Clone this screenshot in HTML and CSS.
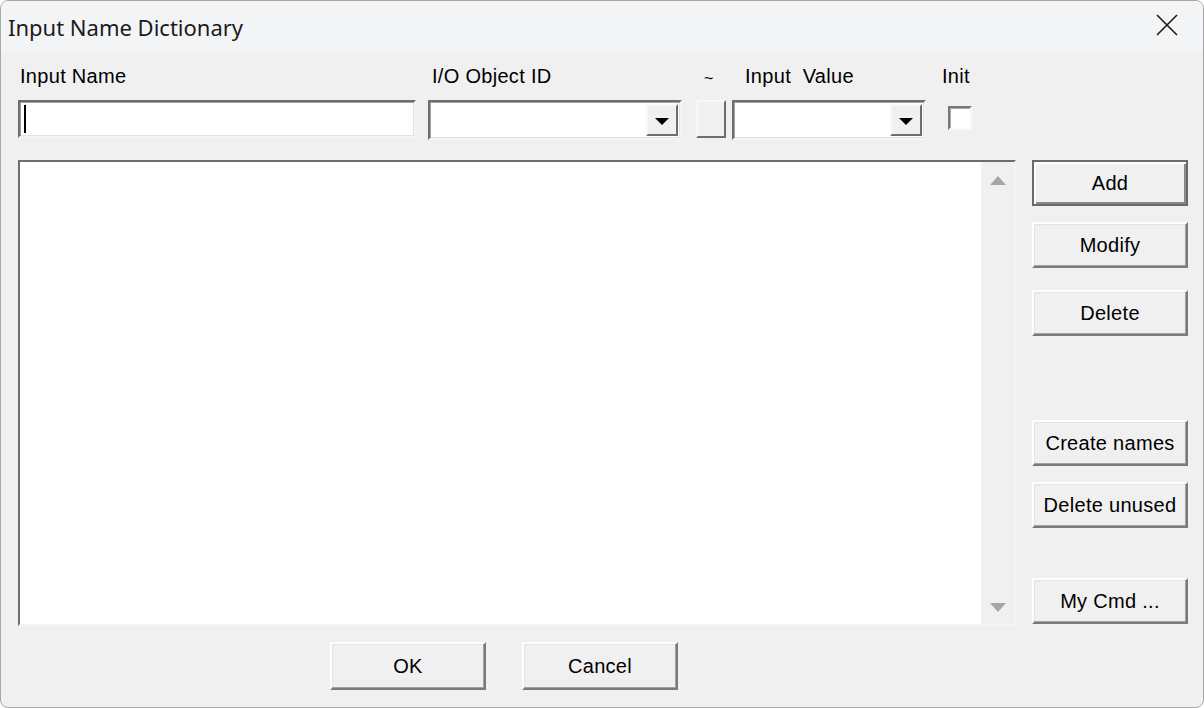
FILE: index.html
```html
<!DOCTYPE html>
<html lang="en">
<head>
    <meta charset="UTF-8">
    <title>Input Name Dictionary</title>
    <link rel="stylesheet" href="styles.css">
</head>
<body>
    <div class="window">
        <div class="titlebar">
            <span class="title">Input Name Dictionary</span>
            <svg class="close" width="22" height="22" viewBox="0 0 22 22">
                <path d="M1 1 L21 21 M21 1 L1 21" stroke="#1a1a1a" stroke-width="1.6" fill="none"/>
            </svg>
        </div>

        <div class="content">
            <div class="fields">
                <div class="field col-name">
                    <label class="lbl">Input Name</label>
                    <div class="textbox"><span class="caret"></span></div>
                </div>
                <div class="field col-io">
                    <label class="lbl">I/O Object ID</label>
                    <div class="combo">
                        <div class="combo-btn"><span class="tri-down"></span></div>
                    </div>
                </div>
                <div class="field col-tilde">
                    <label class="lbl">~</label>
                    <div class="small-btn"></div>
                </div>
                <div class="field col-value">
                    <label class="lbl">Input&nbsp; Value</label>
                    <div class="combo">
                        <div class="combo-btn"><span class="tri-down"></span></div>
                    </div>
                </div>
                <div class="field col-init">
                    <label class="lbl">Init</label>
                    <div class="checkbox"></div>
                </div>
            </div>

            <div class="main">
                <div class="listbox">
                    <div class="list-area"></div>
                    <div class="scrollbar">
                        <span class="sb-up"></span>
                        <span class="sb-down"></span>
                    </div>
                </div>
                <div class="side">
                    <button class="btn btn-default">Add</button>
                    <button class="btn btn-modify">Modify</button>
                    <button class="btn btn-delete">Delete</button>
                    <button class="btn btn-create">Create names</button>
                    <button class="btn btn-unused">Delete unused</button>
                    <button class="btn btn-mycmd">My Cmd ...</button>
                </div>
            </div>

            <div class="footer">
                <button class="btn">OK</button>
                <button class="btn">Cancel</button>
            </div>
        </div>
    </div>
</body>
</html>
```

FILE: styles.css
```css
html, body {
    margin: 0;
    padding: 0;
    background: #ffffff;
}
.window {
    width: 1204px;
    height: 708px;
    box-sizing: border-box;
    border: 1px solid #a9a9a9;
    border-radius: 8px;
    overflow: hidden;
    background: #f0f0f0;
    font-family: "Liberation Sans", Arial, sans-serif;
    font-size: 20px;
    color: #000;
}
.titlebar {
    height: 51px;
    background: #f3f4f6;
    display: flex;
    align-items: center;
    justify-content: space-between;
    padding: 0 25px 0 7px;
}
.title {
    font-family: "Noto Sans", "Open Sans", sans-serif;
    font-size: 22px;
    color: #1b1b1b;
}
.close {
    margin-top: -4px;
}
.content {
    padding: 12px 0 0 17px;
}

/* top field row */
.fields {
    display: flex;
    align-items: flex-start;
}
.field {
    display: flex;
    flex-direction: column;
    gap: 12px;
}
.lbl {
    line-height: 24px;
    height: 24px;
    white-space: nowrap;
    letter-spacing: 0.3px;
}
.col-name { width: 398px; }
.col-name .lbl { padding-left: 2px; }
.col-io { width: 254px; margin-left: 12px; }
.col-io .lbl { padding-left: 4px; }
.col-tilde { width: 30px; margin-left: 14px; }
.col-tilde .lbl { padding-left: 8px; font-size: 16px; line-height: 30px; }
.col-value { width: 194px; margin-left: 6px; }
.col-value .lbl { padding-left: 13px; }
.col-init { width: 30px; margin-left: 16px; }

.textbox, .combo {
    box-sizing: border-box;
    background: #fff;
    border: 2px solid;
    border-color: #6e6e6e #f4f4f4 #f4f4f4 #6e6e6e;
    box-shadow: inset 1px 1px 0 #a0a0a0, inset -1px -1px 0 #e3e3e3;
}
.textbox {
    height: 38px;
    position: relative;
}
.caret {
    position: absolute;
    left: 4px;
    top: 3px;
    width: 2px;
    height: 28px;
    background: #000;
}
.combo {
    height: 40px;
    display: flex;
    justify-content: flex-end;
    padding: 2px;
}
.combo-btn {
    width: 32px;
    box-sizing: border-box;
    background: #f0f0f0;
    border: 2px solid;
    border-color: #f8f8f8 #6e6e6e #6e6e6e #f8f8f8;
    display: flex;
    align-items: center;
    justify-content: center;
}
.tri-down {
    width: 0;
    height: 0;
    border-left: 7px solid transparent;
    border-right: 7px solid transparent;
    border-top: 7px solid #000;
    margin-top: 2px;
}
.small-btn {
    height: 38px;
    width: 30px;
    box-sizing: border-box;
    background: #f0f0f0;
    border: 2px solid;
    border-color: #f8f8f8 #6e6e6e #6e6e6e #f8f8f8;
}
.checkbox {
    width: 24px;
    height: 24px;
    margin: 6px 0 0 6px;
    box-sizing: border-box;
    background: #fff;
    border: 2px solid;
    border-color: #7a7a7a #f8f8f8 #f8f8f8 #7a7a7a;
    box-shadow: inset 1px 1px 0 #a8a8a8;
}

/* list + side buttons */
.main {
    display: flex;
    gap: 16px;
    margin-top: 20px;
}
.listbox {
    width: 998px;
    height: 466px;
    box-sizing: border-box;
    border: 2px solid;
    border-color: #6e6e6e #f4f4f4 #f4f4f4 #6e6e6e;
    box-shadow: inset -1px -1px 0 #e3e3e3;
    display: flex;
}
.list-area {
    flex: 1;
    background: #fff;
}
.scrollbar {
    width: 33px;
    background: #f0f0f0;
    display: flex;
    flex-direction: column;
    justify-content: space-between;
    align-items: center;
    padding: 14px 0 12px;
}
.sb-up, .sb-down {
    width: 0;
    height: 0;
    border-left: 8px solid transparent;
    border-right: 8px solid transparent;
}
.sb-up { border-bottom: 9px solid #a6a6a6; }
.sb-down { border-top: 9px solid #a6a6a6; }

.side {
    display: flex;
    flex-direction: column;
    width: 156px;
}
.btn {
    font-family: "Liberation Sans", Arial, sans-serif;
    font-size: 20px;
    letter-spacing: 0.3px;
    color: #000;
    width: 156px;
    height: 46px;
    box-sizing: border-box;
    background: #f0f0f0;
    border: 2px solid;
    border-color: #fdfdfd #7a7a7a #7a7a7a #fdfdfd;
    box-shadow: inset -1px -1px 0 #a0a0a0, inset 1px 1px 0 #e3e3e3;
    padding: 0;
    cursor: default;
}
.btn-default {
    border: 2px solid #6a6a6a;
    box-shadow: inset 2px 2px 0 #fdfdfd, inset -2px -2px 0 #8a8a8a;
}
.btn-modify { margin-top: 16px; }
.btn-delete { margin-top: 22px; }
.btn-create { margin-top: 84px; }
.btn-unused { margin-top: 16px; }
.btn-mycmd { margin-top: 50px; }

.footer {
    display: flex;
    gap: 36px;
    padding-left: 312px;
    margin-top: 16px;
}
.footer .btn {
    height: 48px;
}
```
